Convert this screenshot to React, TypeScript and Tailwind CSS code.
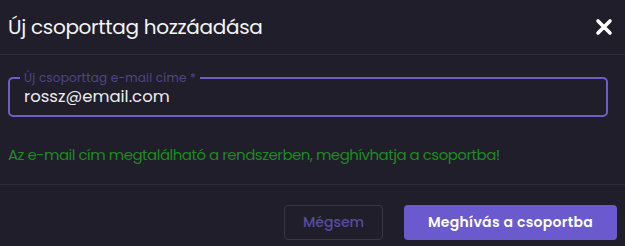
import React from "react";

export default function App() {
  const font = { fontFamily: '"Poppins", "Inter", "Noto Sans", sans-serif' };
  return (
    <div className="w-[625px] h-[246px] bg-[#201e2b] overflow-hidden" style={font}>
      <div className="h-[55px] border-b border-[#2f2d3b] flex items-center justify-between pl-[8px] pr-[12px]">
        <h2 className="text-[20px] text-[#f4f4f6] tracking-[-0.3px]">Új csoporttag hozzáadása</h2>
        <svg width="18" height="18" viewBox="0 0 18 18" className="mt-[-1px]">
          <path d="M3 3 L15 15 M15 3 L3 15" stroke="#ffffff" strokeWidth="3.6" strokeLinecap="round" />
        </svg>
      </div>
      <div className="h-[130px] border-b border-[#2f2d3b] px-[8px] pt-[23px]">
        <div className="relative h-[39px] w-[600px]">
          <fieldset className="absolute inset-0 top-[-6px] border-2 border-[#6b5fc4] rounded-[5px] px-[10px] m-0">
            <legend className="text-[12px] leading-[12px] px-[4px] text-[#4e4685] tracking-[0.2px]">Új csoporttag e-mail címe *</legend>
          </fieldset>
          <div className="absolute left-[16px] top-[8px] text-[16.5px] leading-[22px] text-[#ececf0]">rossz@email.com</div>
        </div>
        <p className="mt-[27px] text-[15px] text-[#1f8a21] tracking-[-0.5px]">
          Az e-mail cím megtalálható a rendszerben, meghívhatja a csoportba!
        </p>
      </div>
      <div className="flex justify-end items-start gap-[21px] pr-[8px] pt-[20px]">
        <button className="h-[35px] w-[99px] rounded-[4px] border border-[#393746] text-[14px] text-[#574c9e] font-medium">
          Mégsem
        </button>
        <button className="h-[35px] w-[213px] rounded-[4px] bg-[#6a5acd] text-[14px] text-white font-semibold tracking-[0.3px]">
          Meghívás a csoportba
        </button>
      </div>
    </div>
  );
}
